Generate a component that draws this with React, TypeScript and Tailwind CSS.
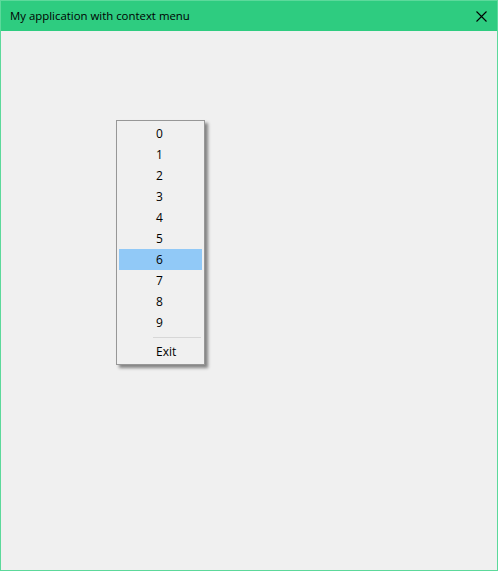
import React from 'react';

const items = ['0', '1', '2', '3', '4', '5', '6', '7', '8', '9'];

export default function App() {
  return (
    <div
      className="flex h-[571px] w-[498px] flex-col border border-[#5cd99b] bg-[#f0f0f0] text-[12px] text-black"
      style={{ fontFamily: '"Open Sans", "Noto Sans", sans-serif' }}
    >
      <div className="flex h-[30px] shrink-0 items-center justify-between bg-[#2ecc80] pl-[9px] pr-[10px]">
        <span className="text-[11.4px] leading-none">My application with context menu</span>
        <svg width="11" height="11" viewBox="0 0 11 11">
          <path d="M0.5 0.5 L10.5 10.5 M10.5 0.5 L0.5 10.5" stroke="#000" strokeWidth="1.1" />
        </svg>
      </div>

      <div className="relative flex-1">
        <div className="absolute left-[115px] top-[89px] w-[89px] border border-[#979797] bg-[#f0f0f0] p-[2px] shadow-[3px_3px_3px_rgba(0,0,0,0.45)]">
          {items.map((n) => (
            <div
              key={n}
              className={
                'flex h-[21px] items-center pl-[37px] leading-none ' +
                (n === '6' ? 'bg-[#91c9f7]' : '')
              }
            >
              {n}
            </div>
          ))}
          <div className="flex h-[8px] items-center pl-[34px] pr-[1px]">
            <div className="h-px w-full bg-[#d7d7d7]" />
          </div>
          <div className="flex h-[21px] items-center pl-[37px] leading-none">Exit</div>
        </div>
      </div>
    </div>
  );
}
